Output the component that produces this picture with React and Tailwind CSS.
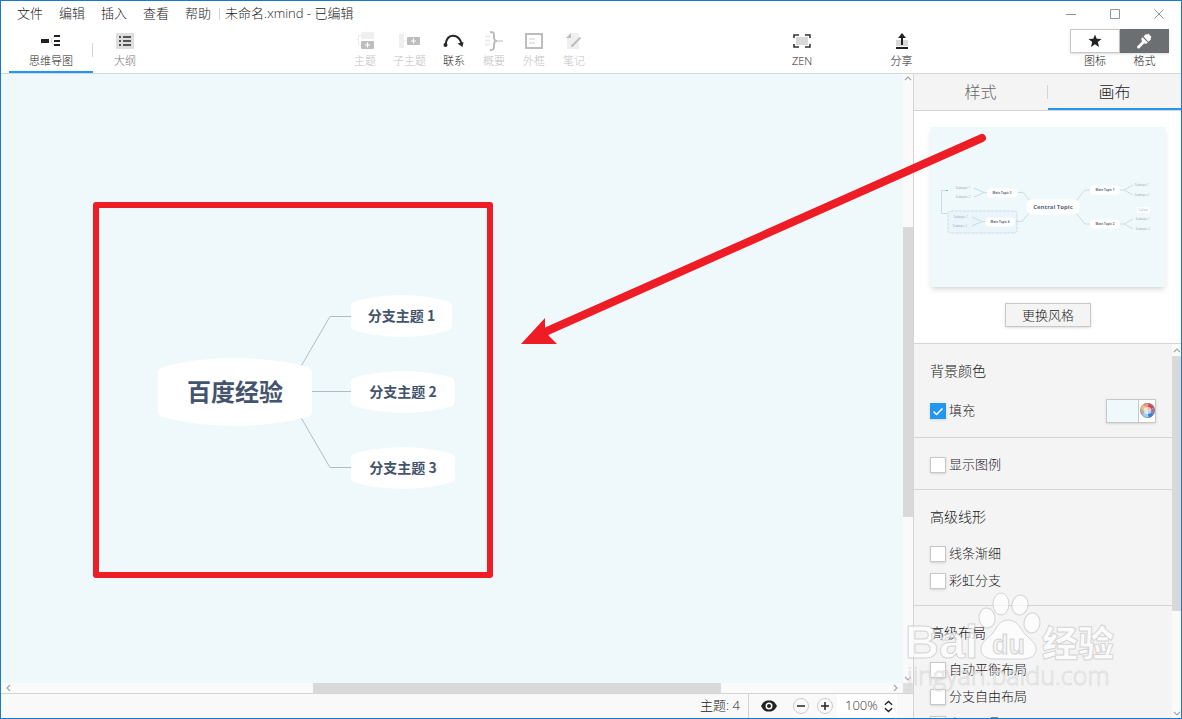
import { useState } from 'react';

const MENUS = ['文件', '编辑', '插入', '查看', '帮助'];

const TOOLS = [
  { label: '主题', icon: TopicIcon, width: 'w-10' },
  { label: '子主题', icon: SubtopicIcon, width: 'w-[49px]' },
  { label: '联系', icon: RelationIcon, width: 'w-10', active: true },
  { label: '概要', icon: SummaryIcon, width: 'w-10' },
  { label: '外框', icon: BoundaryIcon, width: 'w-10' },
  { label: '笔记', icon: NoteIcon, width: 'w-10' },
];

/* ---------- Icons ---------- */

function MindMapIcon() {
  return (
    <svg width="20" height="14" viewBox="0 0 20 14" fill="#222">
      <path d="M15 2.5C9 2.5 9 11.5 15 11.5" fill="none" stroke="#d4d4d4" />
      <path d="M0 5h8v4H0zM13 1h6v2h-6zM13 6h6v2h-6zM13 10h6v2h-6z" />
    </svg>
  );
}

function OutlineIcon() {
  return (
    <svg width="18" height="16" viewBox="0 0 18 16">
      <path d="M0 0h18v16H0z" fill="#dedede" />
      <path d="M3 3h2v2H3zM7 3h8v2H7zM3 7h2v2H3zM7 7h8v2H7zM3 11h2v2H3zM7 11h8v2H7z" fill="#555" />
    </svg>
  );
}

function TopicIcon() {
  return (
    <svg width="18" height="18" viewBox="0 0 18 18" fill="none">
      <path d="M0 7.500h3M5 3.500H2.500V13H5" stroke="#ececec" />
      <rect x="5" y="0" width="13" height="7" rx="1" fill="#efefef" />
      <rect x="5" y="9" width="13" height="8" rx="1" fill="#bdbdbd" />
      <path d="M9 13h5M11.500 10.500v5" stroke="#fff" strokeWidth="1.200" />
    </svg>
  );
}

function SubtopicIcon() {
  return (
    <svg width="22" height="14" viewBox="0 0 22 14" fill="none">
      <rect x="0" y="0" width="5" height="14" rx="1" fill="#efefef" />
      <path d="M5 7h4" stroke="#ececec" />
      <rect x="8" y="3" width="13" height="8" rx="1" fill="#bdbdbd" />
      <path d="M12 7h5M14.500 4.500v5" stroke="#fff" strokeWidth="1.200" />
    </svg>
  );
}

function RelationIcon() {
  return (
    <svg width="22" height="14" viewBox="0 0 22 14" fill="none">
      <path d="M2.500 10.500C4 -1 15 -1 18.500 9" stroke="#262626" strokeWidth="2" />
      <circle cx="2.500" cy="11" r="2" fill="#262626" />
      <path d="M14.500 9.500l6-1.500-1 5z" fill="#262626" />
    </svg>
  );
}

function SummaryIcon() {
  return (
    <svg width="18" height="20" viewBox="0 0 18 20" fill="none">
      <path d="M0 5.500h5M0 9.500h5M0 13.500h5" stroke="#ececec" strokeWidth="2" />
      <path d="M5 1c4 0 4 1 4 4s0 5 3 5c-3 0-3 2-3 5s0 4-4 4" stroke="#bdbdbd" strokeWidth="2" />
      <path d="M12 10h6" stroke="#dedede" strokeWidth="2" />
    </svg>
  );
}

function BoundaryIcon() {
  return (
    <svg width="18" height="16" viewBox="0 0 18 16" fill="none">
      <rect x="1" y="1" width="16" height="14" stroke="#bdbdbd" strokeWidth="2" />
      <path d="M4 6h6M4 10h6" stroke="#e6e6e6" strokeWidth="2" />
    </svg>
  );
}

function NoteIcon() {
  return (
    <svg width="16" height="18" viewBox="0 0 16 18" fill="none">
      <path d="M5 1h8v16H1V5z" fill="#efefef" />
      <path d="M0 6l5-5v5z" fill="#bdbdbd" />
      <path d="M14.500 5.500l-8 8" stroke="#bdbdbd" strokeWidth="2" />
      <path d="M5 15l.5-3 2.500 2.500z" fill="#bdbdbd" />
    </svg>
  );
}

function ZenIcon() {
  return (
    <svg width="18" height="14" viewBox="0 0 18 14" fill="none">
      <path d="M3 3h12v8H3z" fill="#d9d9d9" />
      <path d="M1 4V1h5M12 1h5v3M17 10v3h-5M6 13H1v-3" stroke="#333" strokeWidth="1.600" />
    </svg>
  );
}

function ShareIcon() {
  return (
    <svg width="12" height="16" viewBox="0 0 12 16" fill="none">
      <path d="M0 7h12v6H0z" fill="#d9d9d9" />
      <path d="M6 12V3" stroke="#222" strokeWidth="2" />
      <path d="M2 5l4-5 4 5z" fill="#222" />
      <path d="M0 14h12v2H0z" fill="#222" />
    </svg>
  );
}

function StarIcon() {
  return (
    <svg width="14" height="14" viewBox="0 0 14 14" fill="#222">
      <path d="M7 0.500l1.700 4.300 4.800.3-3.700 3 1.200 4.800L7 10.300l-4 2.600 1.200-4.800-3.700-3 4.800-.3z" />
    </svg>
  );
}

function BrushIcon() {
  return (
    <svg width="16" height="16" viewBox="0 0 16 16" fill="#fff">
      <path d="M7.500 3.500L10 1l1 .8L12.300.5 15.500 4l-1 1.300.5.900-2.500 2.500z" />
      <path d="M6.500 4.200l5.300 5.300-1.500 1.300-2.300-.3-4.500 4.700c-1.500 1.300-3.300-.7-2-2.200L6 8.500l-.8-2.800z" />
    </svg>
  );
}

function Chevron({ dir, className = '' }) {
  const paths = {
    up: 'M1 6l3-3 3 3',
    down: 'M1 2l3 3 3-3',
    left: 'M5 1L2 4l3 3',
    right: 'M3 1l3 3-3 3',
  };
  return (
    <svg className={`shrink-0 ${className}`} width="8" height="8" viewBox="0 0 8 8" fill="none" stroke="#a3a8ae" strokeWidth="1.200">
      <path d={paths[dir]} />
    </svg>
  );
}

function ColorWheel() {
  return (
    <svg width="15" height="15" viewBox="0 0 16 16">
      <path d="M8 8L3 1.500A8 8 0 0 1 9 0z" fill="#e89a84" />
      <path d="M8 8L9 0a8 8 0 0 1 6.500 5z" fill="#d9444d" />
      <path d="M8 8l7.500-3a8 8 0 0 1-1 7.500z" fill="#8c7fae" />
      <path d="M8 8l6.500 4.500A8 8 0 0 1 9 16z" fill="#3f79d0" />
      <path d="M8 8l1 8a8 8 0 0 1-6.500-2.500z" fill="#8fd5f5" />
      <path d="M8 8l-5.500 5.500A8 8 0 0 1 .3 6z" fill="#b3aeb0" />
      <path d="M8 8L.3 6A8 8 0 0 1 3 1.500z" fill="#f2c56b" />
      <circle cx="8" cy="8" r="4" fill="#fff" opacity="0.600" />
      <circle cx="8" cy="8" r="7.500" fill="none" stroke="#8d8d95" strokeWidth="0.700" />
    </svg>
  );
}

/* ---------- Top bars ---------- */

function MenuBar() {
  return (
    <div className="flex h-[25px] shrink-0 items-center text-[13px] leading-5">
      <nav className="flex gap-4 pb-0.5 pl-4">
        {MENUS.map((m) => (
          <button key={m}>{m}</button>
        ))}
      </nav>
      <span className="ml-2 h-3 w-px bg-[#d4d4d4]" />
      <span className="ml-[5px] pb-0.5 whitespace-pre">未命名.xmind - 已编辑</span>
      <div className="ml-auto flex items-center gap-[34px] pr-[17px] text-[#8a94a3]">
        <button aria-label="最小化">
          <svg width="10" height="10" stroke="currentColor"><path d="M0 5.500h10" /></svg>
        </button>
        <button aria-label="最大化">
          <svg width="10" height="10" stroke="currentColor" fill="none"><path d="M.5.500h9v9h-9z" /></svg>
        </button>
        <button aria-label="关闭">
          <svg width="10" height="10" stroke="currentColor"><path d="M.5.500l9 9M9.500.500l-9 9" /></svg>
        </button>
      </div>
    </div>
  );
}

function ToolButton({ label, icon: Icon, width, color = 'text-[#222]' }) {
  return (
    <button className={`flex shrink-0 flex-col items-center pt-[3px] text-[11px] leading-4 ${width} ${color}`}>
      <span className="flex h-6 items-center justify-center">
        <Icon />
      </span>
      {label}
    </button>
  );
}

function Toolbar() {
  return (
    <div className="flex h-12 shrink-0 border-b border-[#d4d7d9] pr-3 pl-2">
      <div className="flex w-[84px] justify-center border-b-2 border-[#2196f3]">
        <ToolButton label="思维导图" icon={MindMapIcon} width="w-20" />
      </div>
      <span className="-ml-px h-3.5 w-px self-center bg-[#d4d4d4]" />
      <ToolButton label="大纲" icon={OutlineIcon} width="w-16" color="text-[#777]" />
      <div className="flex-[19]" />
      {TOOLS.map((t) => (
        <ToolButton key={t.label} {...t} color={t.active ? 'text-[#222]' : 'text-[#c0c0c0]'} />
      ))}
      <div className="flex-[19]" />
      <ToolButton label="ZEN" icon={ZenIcon} width="w-10" />
      <div className="flex-[6]" />
      <ToolButton label="分享" icon={ShareIcon} width="w-10" />
      <div className="flex-[15]" />
      <div className="flex pt-[3px] text-[11px] leading-4">
        <button className="flex w-[50px] flex-col items-center">
          <span className="flex h-6 w-full items-center justify-center border border-[#c8c8c8] shadow-sm">
            <StarIcon />
          </span>
          图标
        </button>
        <button className="flex w-[49px] flex-col items-center">
          <span className="flex h-6 w-full items-center justify-center bg-[#6b6f72] shadow-sm">
            <BrushIcon />
          </span>
          格式
        </button>
      </div>
    </div>
  );
}

/* ---------- Mind map ---------- */

function MapNode({ className, shape, children }) {
  return (
    <div className={`absolute flex items-center justify-center pb-0.5 font-bold text-[#44546c] ${className}`}>
      <svg className="absolute inset-0 h-full w-full" viewBox="0 0 104 42" preserveAspectRatio="none" fill="#fff">
        <path d={shape} />
      </svg>
      <span className="relative whitespace-pre">{children}</span>
    </div>
  );
}

const BRANCH = 'M0 12Q0 8 4 6.500Q26 0 52 0T100 6.500Q104 8 104 12V30Q104 34 100 35.500Q78 42 52 42T4 35.500Q0 34 0 30Z';
const ROOT = 'M0 9Q0 6.500 3 5.500Q26 0 52 0T101 5.500Q104 6.500 104 9V33Q104 35.500 101 36.500Q78 42 52 42T3 36.500Q0 35.500 0 33Z';

function Canvas() {
  return (
    <div className="relative min-h-0 flex-1 overflow-hidden bg-[#eff8fb] font-['Noto_Sans_CJK_SC',sans-serif]">
      <svg className="absolute inset-0 h-full w-full" fill="none" stroke="#b0bcc5" strokeWidth="1">
        <path d="M299 294l30-51.500h22M311 317.500h40M299 342l30 51.500h22" />
      </svg>
      <MapNode className="top-[284px] left-[157px] h-[68px] w-[154px] text-2xl" shape={ROOT}>
        百度经验
      </MapNode>
      <MapNode className="top-[221px] left-[350px] h-[42px] w-[101px] text-sm" shape={BRANCH}>
        分支主题 1
      </MapNode>
      <MapNode className="top-[297px] left-[350px] h-[42px] w-[104px] text-sm" shape={BRANCH}>
        分支主题 2
      </MapNode>
      <MapNode className="top-[373px] left-[350px] h-[42px] w-[104px] text-sm" shape={BRANCH}>
        分支主题 3
      </MapNode>
    </div>
  );
}

function StatusBar() {
  return (
    <div className="flex h-[25px] shrink-0 items-stretch justify-end border-t border-[#d4d4d4] bg-[#f9f9f9] pr-4 text-[13px]">
      <span className="flex items-center border-r border-[#d4d4d4] pr-2">主题: 4</span>
      <button className="flex w-10 items-center justify-center" aria-label="预览">
        <svg width="16" height="12" viewBox="0 0 16 12">
          <path d="M0 6C3 .5 5.500.500 8 .5S13 .5 16 6c-3 5.500-5.500 5.500-8 5.500S3 11.500 0 6z" fill="#222" />
          <circle cx="8" cy="6" r="3.500" fill="#fff" />
          <circle cx="8" cy="6" r="2" fill="#222" />
        </svg>
      </button>
      <div className="flex items-center gap-2 pr-1 pl-1">
        <button aria-label="缩小">
          <svg width="16" height="16" fill="none">
            <circle cx="8" cy="8" r="7.500" stroke="#ccc" />
            <path d="M4 8h8" stroke="#222" strokeWidth="1.500" />
          </svg>
        </button>
        <button aria-label="放大">
          <svg width="16" height="16" fill="none">
            <circle cx="8" cy="8" r="7.500" stroke="#ccc" />
            <path d="M4 8h8M8 4v8" stroke="#222" strokeWidth="1.500" />
          </svg>
        </button>
      </div>
      <div className="relative flex w-[60px] bg-white">
        <select aria-label="缩放比例" className="w-full appearance-none pl-2 text-[13px] text-[#333]">
          <option>100%</option>
        </select>
        <svg className="pointer-events-none absolute top-1.5 right-1" width="9" height="13" viewBox="0 0 10 13" fill="none" stroke="#222" strokeWidth="1.600">
          <path d="M1 4.500l4-3.500 4 3.500M1 8.500L5 12l4-3.500" />
        </svg>
      </div>
    </div>
  );
}

/* ---------- Side panel ---------- */

function MiniNode({ x, y, w, h, size, children }) {
  return (
    <>
      <rect x={x - w / 2} y={y - h / 2} width={w} height={h} rx={h / 2.500} fill="#fff" stroke="none" />
      <text x={x} y={y + size / 3} fontSize={size} fontWeight="700" textAnchor="middle" fill="#5b6878" stroke="none">
        {children}
      </text>
    </>
  );
}

const SUBTOPICS = [
  [33, 61, 'Subtopic 1'],
  [33, 70, 'Subtopic 2'],
  [31, 90, 'Subtopic 1'],
  [30, 99, 'Subtopic 2'],
  [212, 58, 'Subtopic 1'],
  [212, 68, 'Subtopic 2'],
  [213, 92, 'Subtopic 1'],
  [213, 102, 'Subtopic 2'],
];

function StylePreview() {
  return (
    <svg className="block w-full bg-[#eff8fb] shadow-md" viewBox="0 0 236 160" fill="none" stroke="#cddbe5" strokeWidth="1" fontFamily="'Open Sans', sans-serif">
      <rect x="18" y="84" width="69" height="22" rx="3" fill="#eaf4fb" strokeDasharray="3 1" />
      <path d="M18 63.500h-6.500V86.500H17" />
      <path d="M16 63.500h2" stroke="#4fc3f7" />
      <path d="M44 61l10 4.500L44 70M54 65.500h4M42 90l10 4.500L42 99M52 94.500h4" />
      <path d="M88 65.500h5l9 11M86 94.500h6l10-12M146 74l9-11h5M146 86l9 11h5" />
      <path d="M190 63h4l9-5M194 63l9 5M190 97h4l9-5M194 97l9 5" />
      <MiniNode x={123} y={80} w={54} h={15} size={6}>Central Topic</MiniNode>
      <MiniNode x={72} y={66} w={30} h={9} size={3}>Main Topic 3</MiniNode>
      <MiniNode x={70} y={95} w={30} h={9} size={3}>Main Topic 4</MiniNode>
      <MiniNode x={175} y={63} w={30} h={9} size={3}>Main Topic 1</MiniNode>
      <MiniNode x={175} y={97} w={30} h={9} size={3}>Main Topic 2</MiniNode>
      <rect x="207" y="80" width="13" height="6" rx="1" fill="#fff" stroke="none" />
      <g fill="#76828f" stroke="none" textAnchor="middle" fontSize="3">
        <text x="213" y="84">Callout</text>
        {SUBTOPICS.map(([x, y, text]) => (
          <text key={`${x}-${y}`} x={x} y={y + 1}>
            {text}
          </text>
        ))}
      </g>
    </svg>
  );
}

function CheckRow({ label, defaultChecked = false, children }) {
  const [checked, setChecked] = useState(defaultChecked);
  return (
    <div className="flex h-[27px] items-center justify-between pr-4">
      <label className="flex items-center gap-[3px] text-[13px]">
        <span className="relative block h-4 w-4">
          <input
            type="checkbox"
            checked={checked}
            onChange={(e) => setChecked(e.target.checked)}
            className="block h-4 w-4 appearance-none border border-[#c8c8c8] bg-white shadow-sm checked:border-[#2196f3] checked:bg-[#2196f3]"
          />
          {checked && (
            <svg className="pointer-events-none absolute inset-0" width="16" height="16" fill="none" stroke="#fff" strokeWidth="1.500">
              <path d="M3.500 8.500l3 3 6-6" />
            </svg>
          )}
        </span>
        {label}
      </label>
      {children}
    </div>
  );
}

function Section({ title, children }) {
  return (
    <section className="border-b border-[#d4d4d4] pb-[11px] pl-4">
      {title ? <h3 className="mb-[13px] pt-[17px] text-sm leading-5">{title}</h3> : <div className="h-[13px]" />}
      {children}
    </section>
  );
}

function SidePanel() {
  return (
    <aside className="flex w-[268px] shrink-0 flex-col border-l border-[#d4d4d4]">
      <div className="flex h-[37px] shrink-0 items-center border-b border-[#d4d4d4] bg-[#f4f4f4] text-base">
        <button className="flex-1 text-[#666]">样式</button>
        <span className="h-3.5 w-px bg-[#d4d4d4]" />
        <button className="flex-1 self-stretch border-b-2 border-[#2196f3] pt-0.5 text-[#222]">画布</button>
      </div>

      <div className="flex shrink-0 flex-col items-center gap-4 border-b border-[#d4d4d4] py-4 pr-[15px] pl-4">
        <StylePreview />
        <button className="h-6 w-[86px] border border-[#c8c8c8] bg-[#f4f4f4] text-[13px] leading-5 shadow-sm">更换风格</button>
      </div>

      <div className="flex min-h-0 flex-1 bg-[#f4f4f4]">
        <div className="min-w-0 flex-1 overflow-hidden">
          <section className="border-b border-[#d4d4d4] pb-[13px] pl-4">
            <h3 className="mb-4 pt-[17px] text-sm leading-5">背景颜色</h3>
            <CheckRow label="填充" defaultChecked>
              <button className="flex h-6 w-[50px] border border-[#c8c8c8] bg-[#eff8fb] shadow-sm" aria-label="背景颜色">
                <span className="ml-auto flex h-full w-[17px] items-center justify-center border-l border-[#c8c8c8] bg-white">
                  <ColorWheel />
                </span>
              </button>
            </CheckRow>
          </section>
          <Section>
            <CheckRow label="显示图例" />
          </Section>
          <Section title="高级线形">
            <CheckRow label="线条渐细" />
            <CheckRow label="彩虹分支" />
          </Section>
          <Section title="高级布局">
            <CheckRow label="自动平衡布局" />
            <CheckRow label="分支自由布局" />
            <CheckRow label="主题层叠" />
          </Section>
        </div>
        <div className="flex w-[9px] shrink-0 flex-col items-center bg-[#fafafa]">
          <div className="flex h-3 items-center">
            <Chevron dir="up" />
          </div>
          <div className="w-full flex-[255] bg-[#d9d9d9]" />
          <div className="flex flex-[107] items-end">
            <Chevron dir="down" />
          </div>
        </div>
      </div>
    </aside>
  );
}

/* ---------- Overlays ---------- */

function Annotations() {
  return (
    <svg className="pointer-events-none absolute inset-0 h-full w-full" fill="none" stroke="#ee1c25">
      <rect x="95" y="204" width="394" height="370" strokeWidth="6" strokeLinejoin="round" />
      <path d="M981 137L544 331" strokeWidth="8" strokeLinecap="round" />
      <path d="M520 343l24-26v11l4 7 8 8z" fill="#ee1c25" stroke="none" />
    </svg>
  );
}

function Watermark() {
  return (
    <svg
      className="pointer-events-none absolute right-16 bottom-6 h-[104px] w-[212px]"
      viewBox="0 0 212 104"
      fill="#fff"
      fillOpacity="0.700"
      stroke="#bbb"
      strokeOpacity="0.600"
      overflow="visible"
    >
      <ellipse cx="96" cy="14" rx="8" ry="11" />
      <ellipse cx="115" cy="15" rx="8" ry="10" transform="rotate(10 115 15)" />
      <ellipse cx="82" cy="28" rx="8" ry="10" transform="rotate(-8 82 28)" />
      <ellipse cx="127" cy="33" rx="8" ry="10" transform="rotate(8 127 33)" />
      <path d="M103 30c8 0 12 7 16 13 5 6 12 9 12 16 0 7-6 10-13 10H90c-8 0-14-3-14-10 0-7 7-11 12-16 4-6 7-13 15-13z" />
      <g fontWeight="700" fontFamily="'Liberation Sans', sans-serif">
        <text x="0" y="68" fontSize="47">Bai</text>
        <text x="87" y="64" fontSize="27" fill="#eee">du</text>
      </g>
      <text x="137" y="67" fontSize="36" fontWeight="900" fontFamily="'Noto Sans CJK SC', sans-serif">
        经验
      </text>
      <text x="2" y="95" fontSize="25" fontFamily="'Open Sans', sans-serif" strokeOpacity="0.400">
        jingyan.baidu.com
      </text>
    </svg>
  );
}

export default function App() {
  return (
    <div className="relative flex h-screen flex-col overflow-hidden border border-[#1979ca] bg-white font-['Open_Sans','Noto_Sans_CJK_SC',sans-serif] font-light text-[#222]">
      <MenuBar />
      <Toolbar />
      <div className="flex min-h-0 flex-1">
        <main className="flex min-w-0 flex-1 flex-col">
          <div className="flex min-h-0 flex-1">
            <div className="flex min-w-0 flex-1 flex-col">
              <Canvas />
              <div className="flex h-2.5 shrink-0 items-center bg-[#fafafa]">
                <div className="flex flex-[312]">
                  <Chevron dir="left" className="ml-1" />
                </div>
                <div className="h-full flex-[408] bg-[#d9d9d9]" />
                <div className="flex flex-[182] justify-end">
                  <Chevron dir="right" className="mr-1" />
                </div>
              </div>
            </div>
            <div className="flex w-2.5 shrink-0 flex-col items-center bg-[#fafafa]">
              <div className="flex flex-[153] items-start">
                <Chevron dir="up" />
              </div>
              <div className="w-full flex-[290] bg-[#d9d9d9]" />
              <div className="flex flex-[166] items-end">
                <Chevron dir="down" />
              </div>
              <div className="h-2.5 w-full bg-[#dfdfdf]" />
            </div>
          </div>
          <StatusBar />
        </main>
        <SidePanel />
      </div>
      <Annotations />
      <Watermark />
    </div>
  );
}
